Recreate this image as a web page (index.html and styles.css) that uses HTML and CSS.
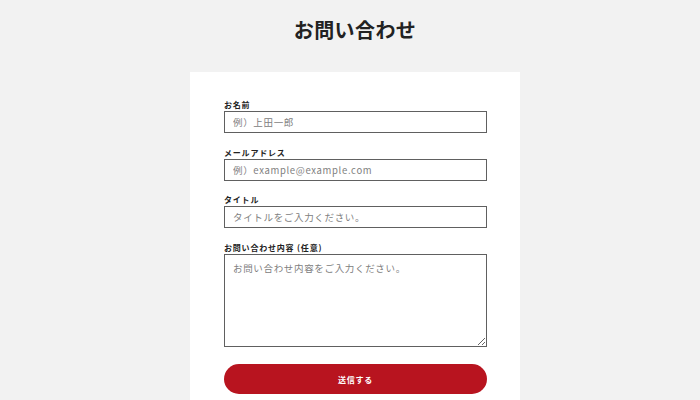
FILE: index.html
```html
<!DOCTYPE html>
<html lang="ja">
<head>
    <meta charset="UTF-8">
    <meta name="viewport" content="width=device-width, initial-scale=1.0">
    <title>お問い合わせ</title>
    <link rel="stylesheet" href="styles.css">
</head>
<body>
    <h1 class="page-title">お問い合わせ</h1>
    <div class="card">
        <form class="contact-form">
            <div class="field">
                <label for="name">お名前</label>
                <input type="text" id="name" placeholder="例）上田一郎">
            </div>
            <div class="field">
                <label for="email">メールアドレス</label>
                <input type="email" id="email" placeholder="例）example@example.com">
            </div>
            <div class="field">
                <label for="subject">タイトル</label>
                <input type="text" id="subject" placeholder="タイトルをご入力ください。">
            </div>
            <div class="field">
                <label for="message">お問い合わせ内容 (任意)</label>
                <textarea id="message" placeholder="お問い合わせ内容をご入力ください。"></textarea>
            </div>
            <button type="submit">送信する</button>
        </form>
    </div>
</body>
</html>
```

FILE: styles.css
```css
body {
    font-family: 'Noto Sans CJK JP', 'Noto Sans', sans-serif;
    margin: 0;
    padding: 0 0 0 10px;
    background: #f2f2f2;
    color: #222;
}

.page-title {
    margin: 15px 0 0;
    font-size: 20px;
    line-height: 30px;
    font-weight: bold;
    text-align: center;
    letter-spacing: 0.02em;
}

.card {
    background: #fff;
    width: 330px;
    margin: 27px auto 0;
    padding: 27px 33px 40px 34px;
    box-sizing: border-box;
}

.contact-form {
    display: flex;
    flex-direction: column;
}

.field {
    display: flex;
    flex-direction: column;
    gap: 1px;
    margin-bottom: 13.5px;
}

label {
    font-size: 8px;
    line-height: 11px;
    font-weight: bold;
    letter-spacing: 0.1em;
    color: #222;
}

input, textarea {
    font-family: inherit;
    font-size: 9.5px;
    letter-spacing: 0.07em;
    border: 1px solid #606060;
    border-radius: 0;
    padding: 0 8px;
    height: 22px;
    box-sizing: border-box;
    outline: none;
    color: #222;
}

textarea {
    height: 93px;
    padding: 6px 8px;
    resize: vertical;
}

input::placeholder, textarea::placeholder {
    color: #808080;
}

button {
    margin-top: 4px;
    height: 30px;
    border: none;
    border-radius: 15px;
    background: #b8141f;
    color: #fff;
    font-family: inherit;
    font-size: 8px;
    font-weight: bold;
    letter-spacing: 0.1em;
    cursor: pointer;
}
```
